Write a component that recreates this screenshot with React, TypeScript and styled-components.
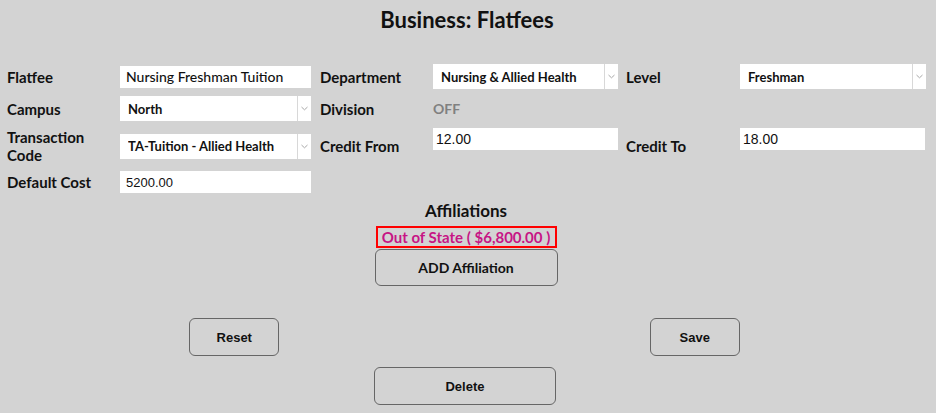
import React from 'react';
import styled, { createGlobalStyle } from 'styled-components';

const GlobalStyle = createGlobalStyle`
  html, body {
    margin: 0;
    padding: 0;
    background: #d3d3d3;
  }
  body {
    font-family: Lato, "Noto Sans", sans-serif;
    color: #111;
  }
`;

const Page = styled.div`
  width: 936px;
  height: 413px;
  overflow: hidden;
  background: #d3d3d3;
`;

const Title = styled.h1`
  margin: 0;
  padding-top: 7px;
  font-size: 22px;
  line-height: 26px;
  font-weight: 700;
  text-align: center;
  padding-right: 2px;
`;

const Grid = styled.div`
  display: grid;
  grid-template-columns: 113px 200px 113px 193px 114px 185px;
  row-gap: 7px;
  align-items: center;
  padding-left: 7px;
  margin-top: 31px;
`;

const Label = styled.label`
  font-size: 15px;
  line-height: 18px;
  font-weight: 700;
`;

const TextInput = styled.input<{ $w: number; $num?: boolean; $top?: boolean; $size?: number }>`
  box-sizing: border-box;
  width: ${({ $w }) => $w}px;
  height: 22px;
  border: none;
  outline: none;
  background: #fff;
  padding: 0 ${({ $top }) => ($top ? 3 : 6)}px;
  align-self: ${({ $top }) => ($top ? 'start' : 'center')};
  font-family: ${({ $num }) => ($num ? '"Liberation Sans", Arial, sans-serif' : 'Lato, "Noto Sans", sans-serif')};
  font-size: ${({ $size }) => $size ?? 14}px;
  font-weight: ${({ $num }) => ($num ? 400 : 500)};
  color: #111;
`;

const SelectBox = styled.div<{ $w: number }>`
  display: flex;
  width: ${({ $w }) => $w}px;
  height: 25px;
  background: #fff;
`;

const NativeSelect = styled.select`
  flex: 1;
  min-width: 0;
  appearance: none;
  border: none;
  outline: none;
  background: transparent;
  padding: 0 0 0 8px;
  font-family: Lato, "Noto Sans", sans-serif;
  font-size: 13px;
  font-weight: 700;
  color: #111;
`;

const ArrowCell = styled.span`
  width: 13px;
  border-left: 1px solid #d8d8d8;
  display: flex;
  align-items: center;
  justify-content: center;
`;

const OffText = styled.span`
  font-size: 14px;
  font-weight: 700;
  color: #808080;
`;

const Center = styled.div`
  display: flex;
  flex-direction: column;
  align-items: center;
  padding-right: 4px;
`;

const SectionHeading = styled.h2`
  margin: 8px 0 5px;
  font-size: 17px;
  line-height: 20px;
  font-weight: 700;
`;

const AffiliationTag = styled.div`
  box-sizing: border-box;
  width: 181px;
  height: 22px;
  border: 2px solid #ff0000;
  color: #c71585;
  font-size: 15px;
  font-weight: 700;
  line-height: 18px;
  text-align: center;
  white-space: nowrap;
`;

const Button = styled.button<{ $w: number; $geo?: boolean }>`
  box-sizing: border-box;
  width: ${({ $w }) => $w}px;
  height: 38px;
  background: transparent;
  border: 1px solid #666;
  border-radius: 6px;
  color: #111;
  font-family: ${({ $geo }) => ($geo ? 'Lato, "Noto Sans", sans-serif' : '"Liberation Sans", Arial, sans-serif')};
  font-size: ${({ $geo }) => ($geo ? 14 : 13)}px;
  font-weight: 700;
  cursor: pointer;
`;

const AddButton = styled(Button)`
  margin-top: 1px;
  height: 37px;
`;

const ButtonRow = styled.div`
  display: grid;
  grid-template-columns: 1fr 1fr;
  justify-items: center;
  padding: 0 11px 0 4px;
  margin-top: 32px;
`;

const DeleteRow = styled(Center)`
  margin-top: 11px;
  padding-right: 6px;
`;

const Chevron = () => (
  <svg width="7" height="5" viewBox="0 0 7 5">
    <path d="M0.5 1 L3.5 3.8 L6.5 1" fill="none" stroke="#a8a8a8" strokeWidth="1" />
  </svg>
);

const Select: React.FC<{ w: number; value: string }> = ({ w, value }) => (
  <SelectBox $w={w}>
    <NativeSelect defaultValue={value}>
      <option>{value}</option>
    </NativeSelect>
    <ArrowCell>
      <Chevron />
    </ArrowCell>
  </SelectBox>
);

const App: React.FC = () => (
  <Page>
    <GlobalStyle />
    <Title>Business: Flatfees</Title>
    <Grid>
      <Label>Flatfee</Label>
      <TextInput $w={191} defaultValue="Nursing Freshman Tuition" />
      <Label>Department</Label>
      <Select w={185} value="Nursing & Allied Health" />
      <Label>Level</Label>
      <Select w={186} value="Freshman" />

      <Label>Campus</Label>
      <Select w={191} value="North" />
      <Label>Division</Label>
      <OffText>OFF</OffText>
      <span />
      <span />

      <Label>
        Transaction
        <br />
        Code
      </Label>
      <Select w={191} value="TA-Tuition - Allied Health" />
      <Label>Credit From</Label>
      <TextInput $w={185} $num $top defaultValue="12.00" />
      <Label>Credit To</Label>
      <TextInput $w={185} $num $top defaultValue="18.00" />

      <Label>Default Cost</Label>
      <TextInput $w={191} $num $size={13} defaultValue="5200.00" />
    </Grid>

    <Center>
      <SectionHeading>Affiliations</SectionHeading>
      <AffiliationTag>Out of State ( $6,800.00 )</AffiliationTag>
      <AddButton $w={183} $geo>ADD Affiliation</AddButton>
    </Center>

    <ButtonRow>
      <Button $w={90}>Reset</Button>
      <Button $w={90}>Save</Button>
    </ButtonRow>

    <DeleteRow>
      <Button $w={182}>Delete</Button>
    </DeleteRow>
  </Page>
);

export default App;
